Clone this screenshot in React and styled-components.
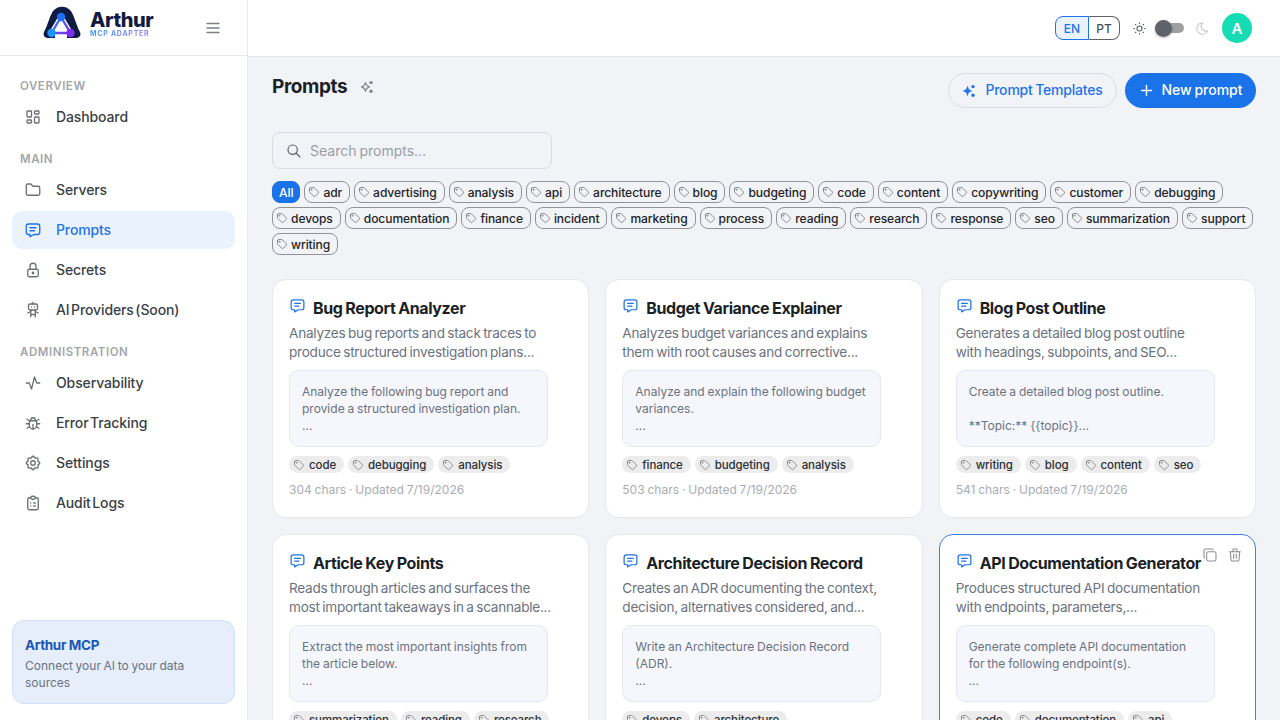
import React from "react";
import styled, { createGlobalStyle } from "styled-components";
import {
  TbLayoutDashboard, TbFolder, TbMessage, TbLock, TbRobot, TbActivity, TbBug, TbSettings,
  TbClipboardList, TbSearch, TbTag, TbPlus, TbSun, TbMoon, TbCopy, TbTrash, TbMenu2,
} from "react-icons/tb";

const Global = createGlobalStyle`
  html, body { margin: 0; padding: 0; height: 100%; overflow: hidden; }
  body { font-family: Inter, "Liberation Sans", sans-serif; color: #1f2329; background: #f1f3f6; }
  * { box-sizing: border-box; }
`;
const Shell = styled.div`display: flex; width: 1280px; height: 720px; overflow: hidden;`;
const Sidebar = styled.aside`
  width: 248px; flex: none; display: flex; flex-direction: column; background: #fff; border-right: 1px solid #e6e8ec;
`;
const Brand = styled.div`
  height: 56px; flex: none; display: flex; align-items: center; justify-content: space-between;
  padding: 0 25px 0 43px; border-bottom: 1px solid #e6e8ec; color: #7b7f86;
  & > svg { stroke-width: 1.75; }
`;
const Logo = styled.div`display: flex; align-items: center; gap: 9px; margin-top: -8px;`;
const LogoSvg = styled.svg`margin-top: -4px;`;
const LogoWords = styled.div`display: flex; flex-direction: column;`;
const LogoName = styled.span`font-size: 20px; line-height: 20px; font-weight: 800; color: #121a3f; letter-spacing: -0.4px;`;
const LogoSub = styled.span`
  font-size: 7px; line-height: 8px; font-weight: 700; letter-spacing: 0.75px; white-space: nowrap;
  background: linear-gradient(90deg, #3b9bf5, #9a7cf7); -webkit-background-clip: text; background-clip: text; color: transparent;
`;
const Nav = styled.nav`flex: 1; padding: 20px 12px 0;`;
const SectionLabel = styled.div`
  height: 20px; line-height: 20px; margin: 13px 0 2px; padding-left: 8px; font-size: 11.5px; font-weight: 600;
  letter-spacing: 0.55px; color: #a3a6ab;
  &:first-child { margin-top: 0; }
`;
const NavItem = styled.div`
  height: 38px; margin-bottom: 2px; display: flex; align-items: center; gap: 14px; padding-left: 12px; border-radius: 10px;
  font-size: 14px; font-weight: 500; letter-spacing: -0.12px; word-spacing: -2px;
  color: ${p => (p.$active ? "#1f73e8" : "#3a3f47")};
  background: ${p => (p.$active ? "#eaf2fe" : "transparent")};
  & svg { color: ${p => (p.$active ? "#1f73e8" : "#6b6f76")}; flex: none; stroke-width: 1.75; }
`;
const NavText = styled.span`margin-top: -2px;`;
const Promo = styled.div`
  margin: 0 12px 16px; height: 84px; padding: 15px 12px; border-radius: 12px; background: #e6eefb; border: 1px solid #cfdff9;
`;
const PromoTitle = styled.div`font-size: 13.5px; line-height: 18px; font-weight: 700; color: #1a56b8; letter-spacing: -0.35px;`;
const PromoText = styled.div`margin-top: 3px; font-size: 12px; line-height: 17px; color: #6b7280; word-spacing: -0.7px;`;
const Main = styled.main`flex: 1; min-width: 0; display: flex; flex-direction: column;`;
const Header = styled.header`
  height: 57px; flex: none; display: flex; align-items: center; justify-content: flex-end; gap: 12px; padding: 0 28px;
  background: #fff; border-bottom: 1px solid #e4e6eb;
`;
const Lang = styled.div`display: flex; height: 24px;`;
const LangOption = styled.div`
  display: flex; align-items: center; justify-content: center; font-size: 12px; font-weight: 500;
  width: ${p => (p.$active ? "34px" : "31px")};
  color: ${p => (p.$active ? "#1f73e8" : "#4a4f57")};
  background: ${p => (p.$active ? "#eaf2fe" : "#fff")};
  border: 1px solid ${p => (p.$active ? "#1f73e8" : "#5f6368")};
  border-left-width: ${p => (p.$active ? "1px" : "0")};
  border-radius: ${p => (p.$active ? "8px 0 0 8px" : "0 8px 8px 0")};
`;
const ThemeSwitch = styled.div`display: flex; align-items: center; gap: 11px; color: #5c6066; & svg { stroke-width: 1.75; }`;
const SunIcon = styled(TbSun)`margin-right: -3px;`;
const Track = styled.div`position: relative; width: 29px; height: 10px; border-radius: 5px; background: #a0a0a0;`;
const Thumb = styled.div`
  position: absolute; left: 0; top: -3.5px; width: 17px; height: 17px; border-radius: 50%; background: #5f6368;
  box-shadow: 0 1px 3px rgba(0,0,0,.25);
`;
const Avatar = styled.div`
  width: 30px; height: 30px; border-radius: 50%; background: #14dcb4; color: #fff;
  display: flex; align-items: center; justify-content: center; font-size: 15px; font-weight: 600;
`;
const Content = styled.div`flex: 1; padding: 16px 24px 0; overflow: hidden;`;
const TopRow = styled.div`display: flex; align-items: center; justify-content: space-between; height: 35px;`;
const TitleGroup = styled.div`display: flex; align-items: center; gap: 13px; color: #85898f; margin-top: -8px;`;
const Title = styled.h1`margin: 0; font-size: 19px; line-height: 28px; font-weight: 700; color: #1b1f26; letter-spacing: -0.4px;`;
const Actions = styled.div`display: flex; gap: 8px;`;
const OutlineButton = styled.button`
  width: 169px; height: 35px; display: flex; align-items: center; justify-content: center; gap: 9px;
  border: 1px solid #d9dce2; border-radius: 18px; background: transparent; color: #1f73e8;
  font: 500 14px Inter, sans-serif; letter-spacing: -0.2px; word-spacing: -1px;
  & > span { margin-top: -2px; }
`;
const PrimaryButton = styled.button`
  width: 131px; height: 35px; display: flex; align-items: center; justify-content: center; gap: 6px;
  border: none; border-radius: 18px; background: #1a73e8; color: #fff;
  font: 500 14px Inter, sans-serif; word-spacing: -1px;
  & > span { margin-top: -2px; }
`;
const Search = styled.div`
  width: 280px; height: 37px; margin-top: 24px; display: flex; align-items: center; gap: 8px; padding: 0 13px;
  border: 1px solid #d9dce2; border-radius: 8px; color: #5c6066;
  & svg { stroke-width: 1.75; }
`;
const Placeholder = styled.span`font-size: 14px; color: #9a9ea5; word-spacing: -1px;`;
const Chips = styled.div`display: flex; flex-wrap: wrap; gap: 4px; margin-top: 12px;`;
const Chip = styled.span`
  height: 22px; display: inline-flex; align-items: center; gap: 3px; padding: 0 7px 0 3px; border-radius: 8px;
  font-size: 12.1px; font-weight: 500; letter-spacing: -0.1px; color: #1f2329; border: 1px solid #8f9399;
  & svg { color: #6b6f76; stroke-width: 1.6; }
`;
const AllChip = styled(Chip)`padding: 0 6px; background: #1a73e8; border-color: #1a73e8; color: #fff;`;
const Grid = styled.div`display: grid; grid-template-columns: repeat(3, 1fr); gap: 16px; margin-top: 24px;`;
const Card = styled.article`
  position: relative; height: 239px; padding: 16px; background: #fff; border-radius: 14px;
  border: 1px solid ${p => (p.$hover ? "#3f80e0" : "#e6e8ec")};
`;
const CardHead = styled.div`display: flex; align-items: center; gap: 7px; height: 24px; color: #1f73e8;`;
const CardIcon = styled(TbMessage)`margin-top: -5px; flex: none; stroke-width: 1.75;`;
const CardTitle = styled.h3`margin: 0; font-size: 16px; font-weight: 700; color: #1b1f26; letter-spacing: -0.4px; word-spacing: -0.5px; white-space: nowrap;`;
const Desc = styled.div`margin-top: 4px; font-size: 13.6px; line-height: 19px; color: #6b7280; letter-spacing: -0.25px; word-spacing: -1px;`;
const Line = styled.span`display: block; white-space: nowrap;`;
const Preview = styled.div`
  width: 259px; height: 77px; margin-top: 8px; padding: 12px; border-radius: 10px; background: #f5f7fc; border: 1px solid #e4e7ee;
  font-size: 12px; line-height: 17px; color: #6b7280; word-spacing: -0.5px;
`;
const Tags = styled.div`display: flex; gap: 4px; margin-top: 9px;`;
const Tag = styled.span`
  height: 17px; display: inline-flex; align-items: center; gap: 4px; padding: 0 8px 0 4px; border-radius: 9px; background: #ececec;
  font-size: 11.5px; font-weight: 500; letter-spacing: -0.1px; color: #2a2e35;
  & svg { color: #75797f; stroke-width: 1.6; }
`;
const Meta = styled.div`margin-top: 9px; font-size: 12px; line-height: 16px; color: #a9adb3; word-spacing: -0.5px;`;
const CardActions = styled.div`position: absolute; top: 12px; right: 12px; display: flex; gap: 9px; color: #8b8f95; & svg { stroke-width: 1.6; }`;

const chips = ["adr","advertising","analysis","api","architecture","blog","budgeting","code","content","copywriting","customer","debugging","devops","documentation","finance","incident","marketing","process","reading","research","response","seo","summarization","support","writing"];
const cards = [
  { t: "Bug Report Analyzer", d: ["Analyzes bug reports and stack traces to", "produce structured investigation plans..."], p: ["Analyze the following bug report and", "provide a structured investigation plan.", "..."], g: ["code","debugging","analysis"], m: "304 chars · Updated 7/19/2026" },
  { t: "Budget Variance Explainer", d: ["Analyzes budget variances and explains", "them with root causes and corrective..."], p: ["Analyze and explain the following budget", "variances.", "..."], g: ["finance","budgeting","analysis"], m: "503 chars · Updated 7/19/2026" },
  { t: "Blog Post Outline", d: ["Generates a detailed blog post outline", "with headings, subpoints, and SEO..."], p: ["Create a detailed blog post outline.", "\u00a0", "**Topic:** {{topic}}..."], g: ["writing","blog","content","seo"], m: "541 chars · Updated 7/19/2026" },
  { t: "Article Key Points", d: ["Reads through articles and surfaces the", "most important takeaways in a scannable..."], p: ["Extract the most important insights from", "the article below.", "..."], g: ["summarization","reading","research"], m: "" },
  { t: "Architecture Decision Record", d: ["Creates an ADR documenting the context,", "decision, alternatives considered, and..."], p: ["Write an Architecture Decision Record", "(ADR).", "..."], g: ["devops","architecture"], m: "" },
  { t: "API Documentation Generator", d: ["Produces structured API documentation", "with endpoints, parameters,..."], p: ["Generate complete API documentation", "for the following endpoint(s).", "..."], g: ["code","documentation","api"], m: "", hover: true },
];
const groups = [
  ["OVERVIEW", [["Dashboard", TbLayoutDashboard]]],
  ["MAIN", [["Servers", TbFolder], ["Prompts", TbMessage, true], ["Secrets", TbLock], ["AI Providers (Soon)", TbRobot]]],
  ["ADMINISTRATION", [["Observability", TbActivity], ["Error Tracking", TbBug], ["Settings", TbSettings], ["Audit Logs", TbClipboardList]]],
];

const LogoMark = () => (
  <LogoSvg width="38" height="33" viewBox="0 0 38 33">
    <defs>
      <linearGradient id="lg" x1="0" y1="0" x2="1" y2="1"><stop offset="0" stopColor="#1b8cf5" /><stop offset="1" stopColor="#7d2cf0" /></linearGradient>
    </defs>
    <path d="M1 27C5 20 7 9 11 5C15 .5 23 .5 27 5C31 9 33 20 37 27C38.5 30.5 36 33 33 33H5C2 33 -.5 30.5 1 27Z" fill="#0f1a45" />
    <path d="M18 12L8.5 28H27.5Z" fill="#fff" stroke="#fff" strokeWidth="5" strokeLinejoin="round" />
    <rect x="12" y="29" width="12" height="4" fill="#fff" />
    <path d="M18 12L8.5 28H27.5Z" fill="#fff" stroke="url(#lg)" strokeWidth="2.4" strokeLinejoin="round" />
    <circle cx="18" cy="12" r="4.2" fill="#1f6ff0" />
    <circle cx="8.5" cy="28" r="4.2" fill="#1b95f7" />
    <circle cx="27.5" cy="28" r="4.2" fill="#7d2cf0" />
  </LogoSvg>
);

const AiSpark = ({ outline }) => (
  <svg width="14" height="14" viewBox="0 0 14 14">
    <path d="M5.5 2.5C5.9 5 6.9 6.1 9.5 6.9C6.9 7.7 5.9 8.8 5.5 11.5C5.1 8.8 4.1 7.7 1.5 6.9C4.1 6.1 5.1 5 5.5 2.5Z"
      fill={outline ? "none" : "currentColor"} stroke="currentColor" strokeWidth={outline ? 1.2 : 0.8} strokeLinejoin="round" />
    <circle cx="11" cy="2.6" r="1.7" fill="currentColor" />
    <circle cx="11" cy="11.2" r="1.7" fill="currentColor" />
  </svg>
);

export default function App() {
  return (
    <Shell>
      <Global />
      <Sidebar>
        <Brand>
          <Logo>
            <LogoMark />
            <LogoWords><LogoName>Arthur</LogoName><LogoSub>MCP ADAPTER</LogoSub></LogoWords>
          </Logo>
          <TbMenu2 size={18} />
        </Brand>
        <Nav>
          {groups.map(([label, items]) => (
            <React.Fragment key={label}>
              <SectionLabel>{label}</SectionLabel>
              {items.map(([name, Icon, active]) => (
                <NavItem key={name} $active={active}><Icon size={18} /><NavText>{name}</NavText></NavItem>
              ))}
            </React.Fragment>
          ))}
        </Nav>
        <Promo>
          <PromoTitle>Arthur MCP</PromoTitle>
          <PromoText>Connect your AI to your data sources</PromoText>
        </Promo>
      </Sidebar>
      <Main>
        <Header>
          <Lang><LangOption $active>EN</LangOption><LangOption>PT</LangOption></Lang>
          <ThemeSwitch>
            <SunIcon size={15} />
            <Track><Thumb /></Track>
            <TbMoon size={15} color="#c4c6ca" />
          </ThemeSwitch>
          <Avatar>A</Avatar>
        </Header>
        <Content>
          <TopRow>
            <TitleGroup><Title>Prompts</Title><AiSpark outline /></TitleGroup>
            <Actions>
              <OutlineButton><AiSpark /><span>Prompt Templates</span></OutlineButton>
              <PrimaryButton><TbPlus size={17} /><span>New prompt</span></PrimaryButton>
            </Actions>
          </TopRow>
          <Search><TbSearch size={16} /><Placeholder>Search prompts...</Placeholder></Search>
          <Chips>
            <AllChip>All</AllChip>
            {chips.map(c => <Chip key={c}><TbTag size={12} />{c}</Chip>)}
          </Chips>
          <Grid>
            {cards.map(c => (
              <Card key={c.t} $hover={c.hover}>
                {c.hover && <CardActions><TbCopy size={16} /><TbTrash size={16} /></CardActions>}
                <CardHead><CardIcon size={17} /><CardTitle>{c.t}</CardTitle></CardHead>
                <Desc>{c.d.map(l => <Line key={l}>{l}</Line>)}</Desc>
                <Preview>{c.p.map(l => <Line key={l}>{l}</Line>)}</Preview>
                <Tags>{c.g.map(g => <Tag key={g}><TbTag size={12} />{g}</Tag>)}</Tags>
                {c.m && <Meta>{c.m}</Meta>}
              </Card>
            ))}
          </Grid>
        </Content>
      </Main>
    </Shell>
  );
}
